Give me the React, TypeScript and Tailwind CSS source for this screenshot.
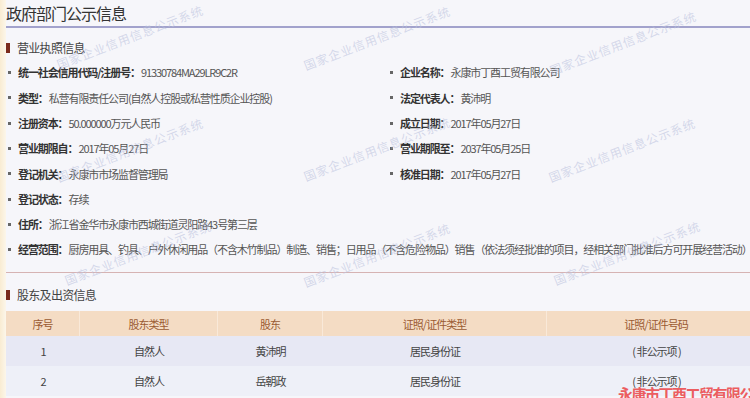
const font = { fontFamily: '"Noto Sans CJK SC", "Noto Sans", sans-serif' }

const marks = [
  "left-[130px] top-[37px]",
  "left-[377px] top-[38px]",
  "left-[623px] top-[43px]",
  "left-[130px] top-[150px]",
  "left-[377px] top-[149px]",
  "left-[622px] top-[150px]",
  "left-[138px] top-[253px]",
  "left-[377px] top-[255px]",
  "left-[627px] top-[253px]",
]

function Item({ label, value, wide }: { label: string; value: string; wide?: boolean }) {
  return (
    <div className={`flex items-center h-[25.3px] whitespace-nowrap ${wide ? "col-span-2" : ""}`}>
      <span className="w-[3px] h-[3px] bg-[#666] ml-[2px] mr-[7px] shrink-0" />
      <span className="font-bold text-[#333]">{label}：</span>
      <span className="text-[#555] ml-[1px]">{value}</span>
    </div>
  )
}

function SectionTitle({ text }: { text: string }) {
  return (
    <div className="flex items-center gap-[7px] text-[12px] tracking-[-0.7px] text-[#444]">
      <span className="w-[4px] h-[10px] bg-[#7a2a1c]" />
      {text}
    </div>
  )
}

const rows = [
  ["1", "自然人", "黄沛明", "居民身份证", "( 非公示项 )"],
  ["2", "自然人", "岳朝政", "居民身份证", "( 非公示项 )"],
]

export default function App() {
  return (
    <div className="relative w-[750px] h-[398px] overflow-hidden flex bg-[#f6f6fa]" style={font}>
      <div className="w-[6px] shrink-0 bg-gradient-to-r from-[#f9ecd2] to-[#fcf6ea]" />
      <div className="flex-1 flex flex-col min-w-0">
        <div className="h-[28px] flex items-center text-[16px] tracking-[-1px] text-[#333] border-b-2 border-[#a2a2cc]">
          政府部门公示信息
        </div>

        <div className="h-[32px] pt-[8px] flex items-center">
          <SectionTitle text="营业执照信息" />
        </div>

        <div className="grid grid-cols-[382px_1fr] text-[11px] tracking-[-1.1px]">
          <Item label="统一社会信用代码/注册号" value="91330784MA29LR9C2R" />
          <Item label="企业名称" value="永康市丁酉工贸有限公司" />
          <Item label="类型" value="私营有限责任公司(自然人控股或私营性质企业控股)" />
          <Item label="法定代表人" value="黄沛明" />
          <Item label="注册资本" value="50.000000万元人民币" />
          <Item label="成立日期" value="2017年05月27日" />
          <Item label="营业期限自" value="2017年05月27日" />
          <Item label="营业期限至" value="2037年05月25日" />
          <Item label="登记机关" value="永康市市场监督管理局" />
          <Item label="核准日期" value="2017年05月27日" />
          <Item label="登记状态" value="存续" wide />
          <Item label="住所" value="浙江省金华市永康市西城街道灵阳路43号第三层" wide />
          <Item
            label="经营范围"
            value="厨房用具、钓具、户外休闲用品（不含木竹制品）制造、销售；日用品（不含危险物品）销售（依法须经批准的项目，经相关部门批准后方可开展经营活动）"
            wide
          />
        </div>

        <div className="mt-[10px] border-t border-[#d6b3b3]" />

        <div className="h-[38px] pt-[6px] flex items-center">
          <SectionTitle text="股东及出资信息" />
        </div>

        <div className="w-[760px] text-[11px] tracking-[-1px]">
          <div className="grid grid-cols-[74px_138px_105px_224px_219px] h-[25px] bg-[#f4dcc4] text-[#9a5a32]">
            {["序号", "股东类型", "股东", "证照/证件类型", "证照/证件号码"].map((h) => (
              <div key={h} className="flex items-center justify-center border-r border-[#f9e9d9]">
                {h}
              </div>
            ))}
          </div>
          {rows.map((r, i) => (
            <div
              key={r[0]}
              className={`grid grid-cols-[74px_138px_105px_224px_219px] h-[30px] text-[#444] ${i === 0 ? "bg-[#e7e8f4]" : "bg-[#eef0f8]"}`}
            >
              {r.map((c, j) => (
                <div key={j} className="flex items-center justify-center">
                  {c}
                </div>
              ))}
            </div>
          ))}
        </div>
      </div>

      {marks.map((m) => (
        <div
          key={m}
          className={`absolute ${m} -translate-x-1/2 -translate-y-1/2 -rotate-[21deg] pointer-events-none whitespace-nowrap text-[12px] tracking-[1px] text-[#bcc3de]/60`}
        >
          国家企业信用信息公示系统
        </div>
      ))}

      <div className="absolute left-[618px] top-[383px] whitespace-nowrap text-[15px] font-bold tracking-[-1.5px] text-[#ec5d60]">
        永康市丁酉工贸有限公司
      </div>
    </div>
  )
}
